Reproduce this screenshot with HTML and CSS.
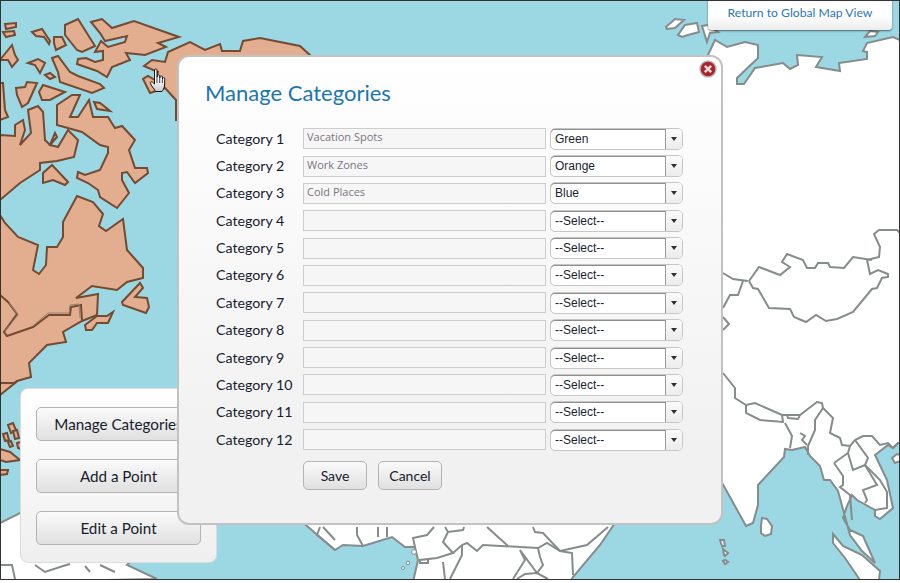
FILE: index.html
```html
<!DOCTYPE html>
<html lang="en">

<head>
    <meta charset="UTF-8">
    <meta name="viewport" content="width=device-width, initial-scale=1.0">
    <title>Manage Categories</title>
    <link rel="stylesheet" href="styles.css">
</head>

<body>
    <div class="stage">
        <!-- Map -->
        <svg class="map" width="900" height="580" viewBox="0 0 900 580">
            <g class="land-tan">
                <polygon points="5,24 16,23 16,27 6,29" />
                <polygon points="3,32 14,31 15,35 6,37" />
                <polygon points="32,32 42,29 50,41 49,44 44,37 36,36" />
                <polygon points="54,37 62,37 66,45 56,50 54,43" />
                <polygon points="65,25 78,19 95,46 82,52 77,50 65,35" />
                <polygon points="91,22 102,19 112,28 134,21 179,37 158,43 166,47 145,55 126,53 130,60 112,67 107,77 97,71 77,64 78,59 86,58 95,62 103,60 103,51 95,52 101,41 108,47 125,42 127,36 105,41 100,33" />
                <polygon points="0,60 8,50 12,45 15,55 18,60 12,67 8,60" />
                <polygon points="28,63 38,59 45,63 40,73 35,65" />
                <polygon points="45,75 50,73 55,77 50,79" />
                <polygon points="52,58 58,56 70,72 78,76 100,84 104,88 92,93 60,82 58,72" />
                <polygon points="16,88 25,87 27,82 37,83 28,103 22,107 17,95" />
                <polygon points="39,92 43,85 65,92 50,100 42,100" />
                <polygon points="57,105 72,95 80,95 70,117 78,117 89,100 93,117 108,117 115,128 122,126 135,140 129,150 135,168 147,168 148,173 135,183 127,172 122,173 122,180 129,193 117,208 100,197 98,190 88,183 77,178 78,172 85,175 100,170 108,153 108,147 100,145 82,132 57,125" />
                <polygon points="94,102 100,103 110,111 97,109" />
                <polygon points="0,135 15,136 15,125 23,120 25,130 20,145 31,133 28,110 38,106 43,112 45,140 50,145 55,133 57,137 50,145 58,147 68,130 78,140 74,157 57,161 40,163 40,170 20,183 0,200" />
                <polygon points="43,173 52,165 68,182 65,185 53,180 43,183" />
                <polygon points="0,83 3,83 5,110 8,117 0,120" />
                <polygon points="144,66 152,60 165,62 168,52 190,42 205,50 220,44 222,51 240,51 243,41 260,38 275,41 300,46 312,57 312,120 176,120 176,100 165,88 150,93 143,79 148,76 155,80 158,72" />
                <polygon points="0,215 5,223 18,237 38,245 33,270 39,274 46,265 47,247 57,247 63,237 63,222 77,196 93,202 103,214 99,226 106,231 123,219 127,250 143,268 143,278 127,282 117,290 92,286 76,298 98,294 97,315 82,321 63,332 66,342 47,345 29,363 31,377 17,381 5,390 0,395" />
                <polygon points="122,302 140,283 143,288 135,297 147,298 149,307 146,313 123,305" />
                <polygon points="85,325 97,316 107,316 113,312 108,323 97,323 92,330 86,330" />
                <polygon points="0,383 0,395 15,383" />
                <polygon points="8,425 13,423 16,430 11,433" />
                <polygon points="3,434 7,433 9,440 5,441" />
                <polygon points="13,431 17,430 19,438 15,439" />
                <polygon points="8,442 11,441 13,446 10,447" />
                <polygon points="0,449 10,452 20,460 6,462 0,460" />
                <polygon points="0,470 8,470 7,474 0,475" />
                <polygon points="17,443 21,442 21,449 18,448" />
            </g>
            <path class="lake" d="M0,295 8,302 17,314 4,332 7,336 33,327 49,315 70,315 71,307 81,305 82,321" />
            <path class="lake-fill" d="M5,331 18,315 9,303 M34,325 48,313 69,313 70,305 79,304 80,318" />

            <g class="land-white">
                <polygon points="708,55 715,40 727,47 745,42 758,45 758,58 737,78 737,84 744,84 755,68 783,63 790,69 798,65 797,55 822,57 816,67 840,71 839,63 867,59 867,52 863,51 867,43 893,37 900,40 900,443 898,443 893,448 888,445 875,455 887,480 893,508 880,519 875,516 875,510 857,500 852,495 847,506 843,518 850,530 863,536 875,563 862,551 850,535 838,491 830,480 824,480 820,466 810,456 805,447 792,450 785,449 784,457 758,485 758,505 753,523 746,526 715,470 680,300 680,70 700,70" />
                <polygon points="666,27 675,19 684,20 675,28 667,29" />
                <polygon points="678,35 685,25 697,23 699,32 688,35 682,37" />
                <polygon points="702,26 708,25 718,32 710,33 707,42" />
                <polygon points="865,37 870,31 878,32 875,36" />
                <polygon points="761,526 762,518 767,519 772,526 771,534 765,536 761,533" />
                <polygon points="833,534 843,546 862,555 880,571 879,580 860,580 845,558 833,543" />
                <polygon points="892,458 897,454 900,455 900,461 895,463" />
                <polygon points="720,540 724,540 725,546 722,546" />
                <polygon points="723,549 728,553 725,556 724,555" />
                <polygon points="723,561 725,560 728,562 725,564" />
                <polygon points="300,520 617,520 600,545 573,577 570,582 413,582 418,560 415,547 405,547 392,537 363,546 343,545 335,550" />
                <polygon points="0,523 20,513 150,540 127,565 157,579 0,582" />
            </g>

            <g class="border-lines">
                <path d="M723,273 733,279 748,281" />
                <path d="M743,281 738,295 730,295 723,308" />
                <path d="M749,281 753,288 758,289 769,308 790,309 794,317 806,322 816,315 826,321 837,319 853,312 872,289 877,288 882,278 888,277 888,274 878,270 870,274 867,260 879,257 880,247 874,234 879,230 897,230 900,233" />
                <path d="M749,281 759,267 780,275 790,267 782,262 787,254 803,260 807,268 815,268 818,263 828,263 830,267 844,268 853,257 872,260" />
                <path d="M723,317 729,324 723,330" />
                <path d="M723,373 735,388 735,398 746,405 755,403 782,415 787,415 800,415 817,402 822,403 823,408 833,418 830,433 840,438 842,445 850,446 855,440 863,436 872,436 880,445 888,443 893,448 898,443" />
                <path d="M746,405 746,413 760,420 783,422 782,415" />
                <path d="M787,415 800,415 798,419 788,418 787,415" />
                <path d="M823,408 815,420 815,430 808,446 808,455" />
                <path d="M785,423 792,436 790,448" />
                <path d="M800,433 805,436 802,440 807,445" />
                <path d="M834,463 848,453 850,446 M834,463 843,476 843,485 840,487 850,495 852,520" />
                <path d="M848,453 853,470 865,465 877,485 863,490 867,500 865,503" />
                <path d="M855,440 868,458 865,465 880,480 887,492 887,508 875,510" />
                <path d="M320,527 317,535 335,550 M323,527 335,540" />
                <path d="M357,527 357,535 363,546" />
                <path d="M378,527 378,537 M387,527 387,537" />
                <path d="M434,527 427,535 413,538 415,547" />
                <path d="M445,527 448,532 463,530 464,527" />
                <path d="M448,532 443,542 453,553 437,558 420,560 420,563 428,563 428,560" />
                <path d="M453,553 462,545 467,543 477,551 483,545 520,547" />
                <path d="M487,527 508,546" />
                <path d="M520,547 538,548 547,543 560,551 587,545 608,527" />
                <path d="M533,527 535,532 543,533 560,551 572,553 573,575" />
                <path d="M538,548 540,557 543,565 537,573 520,550 525,560 513,579" />
                <path d="M462,545 462,555 450,579 M443,562 445,579" />
                <path d="M517,579 525,574 537,573 548,579" />
                <path d="M0,565 12,565 15,579 M35,565 45,572 63,566 70,564 M85,566 90,572 M100,565 115,572" />
            </g>
            <g class="islet">
                <circle cx="414" cy="552" r="2.4" />
                <circle cx="408" cy="563" r="1.8" />
                <circle cx="403" cy="568" r="1.5" />
            </g>
        </svg>

        <!-- Panneau retour -->
        <div class="return-panel">
            <a href="#">Return to Global Map View</a>
        </div>

        <!-- Panneau gauche -->
        <div class="side-panel">
            <button class="btn btn-big">Manage Categories</button>
            <button class="btn btn-big">Add a Point</button>
            <button class="btn btn-big">Edit a Point</button>
        </div>

        <!-- Curseur -->
        <svg class="cursor" width="20" height="26" viewBox="0 0 20 26">
            <defs>
                <linearGradient id="handFill" x1="0" y1="0" x2="0" y2="1">
                    <stop offset="0.45" stop-color="#fff" />
                    <stop offset="1" stop-color="#c9c9c9" />
                </linearGradient>
            </defs>
            <path fill="url(#handFill)" stroke="#111" stroke-width="1" stroke-linejoin="round" d="M5.5,2 C5.5,0.6 8,0.6 8,2 L8,9.5 L8.4,7.5 C8.6,6.5 10.6,6.6 10.7,7.8 L10.8,10 L11.2,8.5 C11.5,7.5 13.3,7.7 13.4,8.9 L13.4,11 L13.9,10 C14.3,9.2 15.8,9.6 15.8,10.8 L15.6,17 C15.4,20 14,22 13,23.5 L6.5,23.5 C5.5,21 3,19 1.5,15.5 C1,14 2.6,13.2 3.6,14.2 L5.5,16 Z" />
            <path fill="none" stroke="#111" stroke-width="0.8" d="M8,10 V15 M10.7,10 V15 M13.4,11 V15" />
        </svg>

        <!-- Fenêtre des catégories -->
        <div class="modal">
            <span class="close-btn">
                <svg width="18" height="18" viewBox="0 0 18 18">
                    <circle cx="9" cy="9" r="8" fill="#a9242c" stroke="#b9b9b9" stroke-width="1.5" />
                    <path d="M5.8,5.8 L12.2,12.2 M12.2,5.8 L5.8,12.2" stroke="#f3dcdc" stroke-width="2.4" />
                </svg>
            </span>
            <h1>Manage Categories</h1>

            <div class="row">
                <label>Category 1</label>
                <input class="text-field" type="text" value="Vacation Spots">
                <div class="select-box"><span class="select-value">Green</span><span class="select-arrow"></span></div>
            </div>
            <div class="row">
                <label>Category 2</label>
                <input class="text-field" type="text" value="Work Zones">
                <div class="select-box"><span class="select-value">Orange</span><span class="select-arrow"></span></div>
            </div>
            <div class="row">
                <label>Category 3</label>
                <input class="text-field" type="text" value="Cold Places">
                <div class="select-box"><span class="select-value">Blue</span><span class="select-arrow"></span></div>
            </div>
            <div class="row">
                <label>Category 4</label>
                <input class="text-field" type="text">
                <div class="select-box"><span class="select-value">--Select--</span><span class="select-arrow"></span></div>
            </div>
            <div class="row">
                <label>Category 5</label>
                <input class="text-field" type="text">
                <div class="select-box"><span class="select-value">--Select--</span><span class="select-arrow"></span></div>
            </div>
            <div class="row">
                <label>Category 6</label>
                <input class="text-field" type="text">
                <div class="select-box"><span class="select-value">--Select--</span><span class="select-arrow"></span></div>
            </div>
            <div class="row">
                <label>Category 7</label>
                <input class="text-field" type="text">
                <div class="select-box"><span class="select-value">--Select--</span><span class="select-arrow"></span></div>
            </div>
            <div class="row">
                <label>Category 8</label>
                <input class="text-field" type="text">
                <div class="select-box"><span class="select-value">--Select--</span><span class="select-arrow"></span></div>
            </div>
            <div class="row">
                <label>Category 9</label>
                <input class="text-field" type="text">
                <div class="select-box"><span class="select-value">--Select--</span><span class="select-arrow"></span></div>
            </div>
            <div class="row">
                <label>Category 10</label>
                <input class="text-field" type="text">
                <div class="select-box"><span class="select-value">--Select--</span><span class="select-arrow"></span></div>
            </div>
            <div class="row">
                <label>Category 11</label>
                <input class="text-field" type="text">
                <div class="select-box"><span class="select-value">--Select--</span><span class="select-arrow"></span></div>
            </div>
            <div class="row">
                <label>Category 12</label>
                <input class="text-field" type="text">
                <div class="select-box"><span class="select-value">--Select--</span><span class="select-arrow"></span></div>
            </div>

            <div class="actions">
                <button class="btn btn-small">Save</button>
                <button class="btn btn-small">Cancel</button>
            </div>
        </div>
    </div>
</body>

</html>
```
FILE: styles.css
```css
/* Page */
body {
    margin: 0;
    background-color: #fff;
    font-family: Lato, sans-serif;
    color: #16202c;
}

.stage {
    position: relative;
    width: 900px;
    height: 580px;
    overflow: hidden;
    background-color: #9bd8e4;
}

/* Cadre sombre autour de la carte */
.stage::after {
    content: "";
    position: absolute;
    inset: 0;
    border: 1px solid #333;
    pointer-events: none;
}

/* Carte */
.map {
    position: absolute;
    left: 0;
    top: 0;
}

.land-tan polygon {
    fill: #e3ae8f;
    stroke: #744a30;
    stroke-width: 2;
}

.lake {
    fill: none;
    stroke: #744a30;
    stroke-width: 2;
}

.lake-fill {
    fill: none;
    stroke: #8f8070;
    stroke-width: 1;
}

.land-white polygon {
    fill: #fff;
    stroke: #868b8b;
    stroke-width: 2;
}

.border-lines path {
    fill: none;
    stroke: #868b8b;
    stroke-width: 2;
}

.islet circle {
    fill: #fff;
    stroke: #868b8b;
    stroke-width: 1;
}

.cursor {
    position: absolute;
    left: 149px;
    top: 68px;
}

/* Panneau retour */
.return-panel {
    position: absolute;
    left: 708px;
    top: -6px;
    width: 184px;
    height: 36px;
    box-sizing: border-box;
    display: flex;
    align-items: center;
    justify-content: center;
    background: linear-gradient(#fff 60%, #ececec);
    border-radius: 0 0 4px 4px;
    box-shadow: 0 1px 2px rgba(0, 0, 0, 0.55);
}

.return-panel a {
    color: #2c76b4;
    font-size: 12.2px;
    text-decoration: none;
}

/* Panneau gauche */
.side-panel {
    position: absolute;
    left: 20px;
    top: 388px;
    width: 197px;
    height: 175px;
    box-sizing: border-box;
    padding: 18px 15px 0 15px;
    display: flex;
    flex-direction: column;
    gap: 18px;
    background: linear-gradient(#fff, #efefef);
    border: 1px solid #dcdcdc;
    border-radius: 8px;
}

/* Boutons */
.btn {
    padding: 0;
    background: linear-gradient(#fafafa, #e0e0e0);
    border: 1px solid #b4b4b4;
    border-radius: 5px;
    color: #16202c;
    font-family: Lato, sans-serif;
    cursor: pointer;
}

.btn-big {
    width: 165px;
    height: 34px;
    font-size: 15.2px;
    white-space: nowrap;
}

.btn-small {
    width: 64px;
    height: 29px;
    font-size: 14px;
}

/* Fenêtre */
.modal {
    position: absolute;
    left: 177px;
    top: 55px;
    width: 546px;
    height: 470px;
    box-sizing: border-box;
    padding: 23px 0 0 26px;
    background: linear-gradient(#fff, #f1f1f1 85%);
    border: 2px solid #c2c2c2;
    border-radius: 12px;
}

.modal h1 {
    margin: 0 0 19px 0;
    height: 26px;
    color: #1b76ad;
    font-size: 22px;
    line-height: 26px;
    font-weight: 400;
}

.close-btn {
    position: absolute;
    right: 4px;
    top: 3px;
    width: 18px;
    height: 18px;
}

.row {
    display: flex;
    align-items: center;
    height: 27.36px;
}

.row label {
    width: 87px;
    margin-left: 11px;
    padding-bottom: 1px;
    font-size: 14.2px;
}

.text-field {
    width: 243px;
    height: 21px;
    box-sizing: border-box;
    margin: 0 4px 0 0;
    padding: 0 0 4px 3px;
    background-color: #f6f6f6;
    border: 1px solid #cdcdcd;
    color: #7d7480;
    font-family: "Open Sans", sans-serif;
    font-size: 11px;
}

.select-box {
    display: flex;
    width: 133px;
    height: 22px;
    box-sizing: border-box;
    background-color: #fff;
    border: 1px solid #c6c6c6;
    border-radius: 5px;
}

.select-value {
    flex: 1;
    padding-left: 4px;
    border-radius: 4px 0 0 4px;
    box-shadow: inset 0 1px #8e8e8e;
    font-family: "Liberation Sans", sans-serif;
    font-size: 12px;
    line-height: 21px;
    color: #1a2430;
}

.select-arrow {
    position: relative;
    width: 16px;
    background: linear-gradient(#fbfbfb, #ececec);
    border-left: 1px solid #9a9a9a;
    border-radius: 0 4px 4px 0;
}

.select-arrow::after {
    content: "";
    position: absolute;
    left: 5px;
    top: 8px;
    border-left: 3px solid transparent;
    border-right: 3px solid transparent;
    border-top: 4px solid #2b3038;
}

.actions {
    display: flex;
    gap: 11px;
    margin: 8px 0 0 98px;
}
```
